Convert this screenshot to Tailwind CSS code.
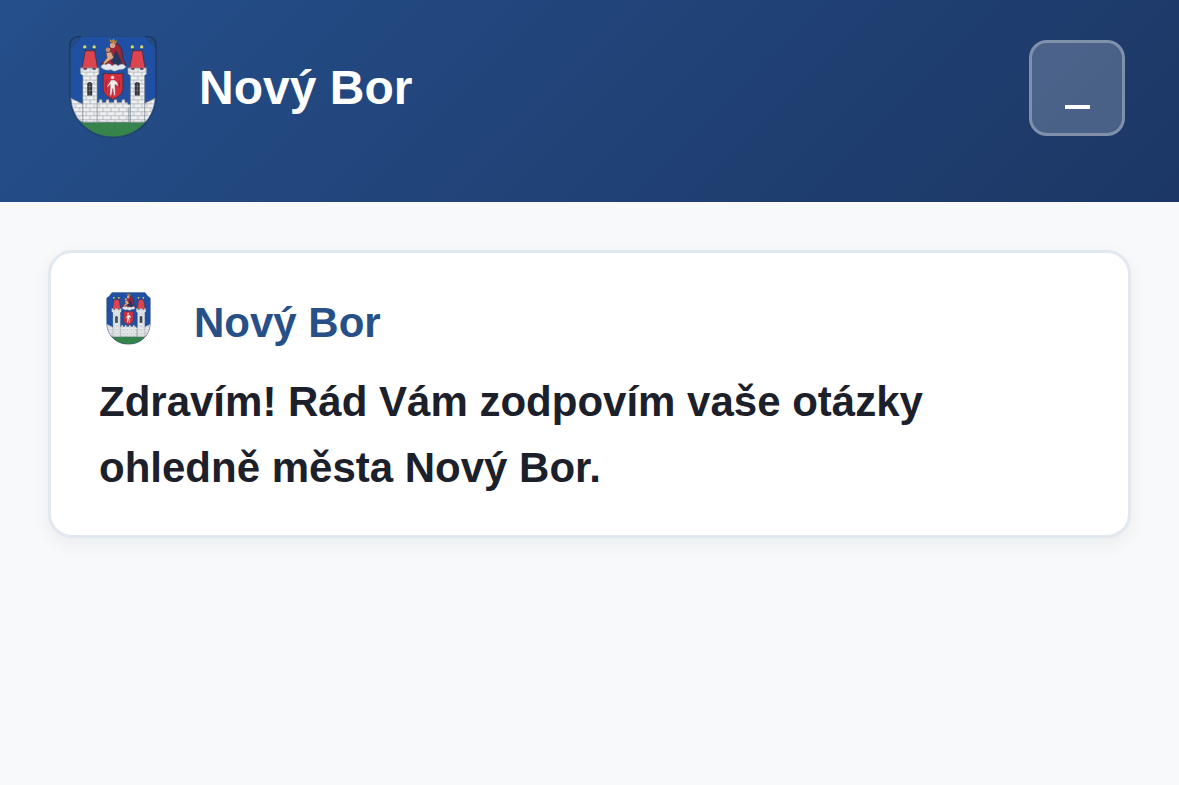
<!DOCTYPE html>
<html lang="cs">
<head>
  <meta charset="UTF-8">
  <meta name="viewport" content="width=device-width, initial-scale=1">
  <title>Nový Bor</title>
  <script src="https://cdn.jsdelivr.net/npm/@tailwindcss/browser@4"></script>
  <style>
    body { font-family: 'Liberation Sans', Arial, sans-serif; }
  </style>
</head>
<body class="min-h-screen bg-[#f7f9fb]">

  <!-- City coat of arms, shared by the header and the message -->
  <svg class="absolute size-0" aria-hidden="true">
    <defs>
      <pattern id="bricks" width="8" height="8" patternUnits="userSpaceOnUse">
        <rect width="8" height="8" fill="#eef0f1"/>
        <path d="M0 .5H8M0 4.5H8M2 .5V4.5M6 4.5V8" stroke="#9a9ea4" stroke-width=".6"/>
      </pattern>
      <clipPath id="shield">
        <path d="M12 0H76Q80 7 87 12V58C87 86 66 102 44 102S1 86 1 58V12Q8 7 12 0Z"/>
      </clipPath>
      <g id="tower">
        <path d="M5 15V11M14 15V11" stroke="#222" stroke-width=".8"/>
        <circle cx="4.500" cy="11" r="1.700" fill="#d8dc62"/>
        <circle cx="14" cy="11" r="1.700" fill="#d8dc62"/>
        <path d="M5 15H14.500L17.500 33H1.700Z" fill="#dc4550" stroke="#4b2337" stroke-width=".7"/>
        <path d="M0 32H3.500V34H6.500V32H12.500V34H15.500V32H19V38L17 40V87H2.500V40L0 38Z" fill="url(#bricks)" stroke="#66707c" stroke-width=".6"/>
        <path d="M7 60V48Q9.500 45 12 48V60Z" fill="#30333b"/>
        <path d="M9.500 47V60M7 51H12M7 55H12" stroke="#8b8d92" stroke-width=".5"/>
      </g>
      <symbol id="arms" viewBox="0 0 88 103">
        <g clip-path="url(#shield)">
          <rect width="88" height="103" fill="#2050a4"/>
          <rect y="86" width="88" height="17" fill="#37834c"/>
          <path d="M0 62L14 69V86H0ZM88 62L74 69V86H88Z" fill="url(#bricks)"/>
          <path d="M0 62L14 69H27V67H30V64H33V67H37V64H40V67H45V64H48V67H53V64H56V67H59V69H74L88 62V83L74 87H14L0 81Z" fill="url(#bricks)" stroke="#69737d" stroke-width=".6"/>
          <path d="M27 72V87M60 72V87" stroke="#69737d" stroke-width=".7"/>
          <use href="#tower" x="11"/>
          <use href="#tower" x="59"/>
          <!-- Madonna above a cloud -->
          <path d="M41 10Q43 4 49 8Q54 13 54 23L57 29L51 32H35L32 28Q39 24 41 17Z" fill="#9f2636" stroke="#302331" stroke-width=".7"/>
          <path d="M47 14L54 28L48 31L42 26Z" fill="#28365c"/>
          <circle cx="43.500" cy="9.500" r="2.700" fill="#d9a187"/>
          <path d="M41 6L40.500 3L43 4.500L44.500 2.500L46 5L48 4L47 8Z" fill="#b88338"/>
          <circle cx="39" cy="14" r="2.400" fill="#c48c65"/>
          <path d="M37 17L42 16L45 22L40 25L35 29L34 27L38 22Z" fill="#dfa888" stroke="#543236" stroke-width=".6"/>
          <path d="M32 30Q35 27 37 29Q40 26 43 30Q47 27 49 30Q54 26 57 31Q56 34 50 34Q45 37 42 34Q37 36 32 32Z" fill="#e5e8ed" stroke="#747e93" stroke-width=".5"/>
          <!-- Red shield with a standing figure -->
          <path d="M34 38H54V53Q54 60 44 64Q34 60 34 53Z" fill="#d52f3f" stroke="#432c3b" stroke-width=".8"/>
          <circle cx="43.500" cy="42" r="1.800" fill="#f1d3c9"/>
          <path d="M42 44.500H45.500L48.500 47L49.500 51L48 50L46 49L46.500 60H44.800L43.800 53L42.500 60H40.800L41.300 49L38.500 52L38 51Z" fill="#f5ece9" stroke="#663344" stroke-width=".4"/>
          <path d="M37 44V56M50.500 45V52" stroke="#742536" stroke-width=".7"/>
        </g>
        <path d="M12 .5H76Q80 7 87 12V58C87 86 66 102 44 102S1 86 1 58V12Q8 7 12 .5Z" fill="none" stroke="#26466e" stroke-width=".8"/>
      </symbol>
      <linearGradient id="edge" x1="0" y1="0" x2="0" y2="1">
        <stop offset="0" stop-color="#17305a"/>
        <stop offset="1" stop-color="#17305a" stop-opacity=".5"/>
      </linearGradient>
    </defs>
  </svg>

  <header class="flex items-start justify-between bg-linear-135 from-[#254f8b] to-[#1c3765] pt-9 pr-[54px] pb-16 pl-[69px]">
    <div class="flex items-center gap-[42px]">
      <svg class="h-[102px] w-[88px] overflow-visible" viewBox="0 0 88 103" role="img" aria-label="Znak města Nový Bor">
        <path d="M.5 58V10Q.5 .5 10 .5H78Q87.500 .5 87.500 10V58C87.500 87 66 102.500 44 102.500S.5 87 .5 58Z" fill="#234a85" stroke="url(#edge)" stroke-width="1.200"/>
        <use href="#arms" width="88" height="103"/>
      </svg>
      <h1 class="pt-0.5 text-[48px] leading-[58px] font-bold text-white">Nový Bor</h1>
    </div>
    <button type="button" class="mt-1 flex size-24 items-end justify-center rounded-[18px] border-3 border-white/30 bg-white/20 pb-6" aria-label="Minimalizovat">
      <span class="h-1 w-[25px] bg-white"></span>
    </button>
  </header>

  <main class="p-12">
    <article class="rounded-3xl border-3 border-[#e2e8f0] bg-white px-12 pt-9 pb-[34px] shadow-[0_6px_18px_rgba(0,0,0,0.06)]">
      <div class="flex items-start gap-[43px] pl-[7px]">
        <svg class="mt-[3px] h-[53px] w-[45px]" role="img" aria-label="Znak města Nový Bor"><use href="#arms"/></svg>
        <h2 class="pt-1.5 text-[42px] leading-[56px] font-bold text-[#274f88]">Nový Bor</h2>
      </div>
      <p class="mt-[18px] text-[42px] leading-[66px] font-bold text-[#1c202b]">Zdravím! Rád Vám zodpovím vaše otázky ohledně města Nový Bor.</p>
    </article>
  </main>

</body>
</html>
